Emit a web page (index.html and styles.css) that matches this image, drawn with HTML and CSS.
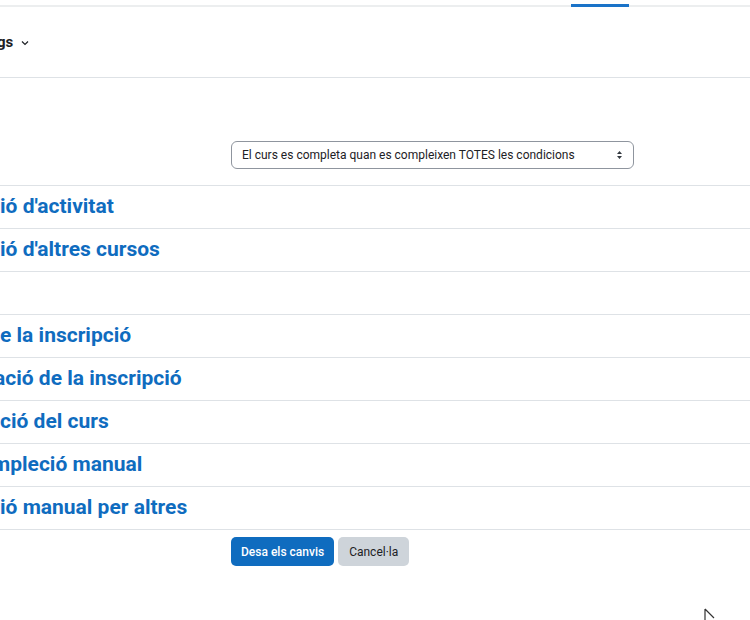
FILE: index.html
```html
<!DOCTYPE html>
<html lang="ca">
<head>
<meta charset="utf-8">
<title>Configuració de compleció del curs</title>
<link rel="stylesheet" href="styles.css">
</head>
<body>
<div class="tabs"><span class="tab-active"></span></div>
<div class="tertiary">
  <span class="tert-title">gs</span>
  <svg class="chev" width="8" height="6" viewBox="0 0 8 6"><path d="M1 1.5 L4 4.5 L7 1.5" fill="none" stroke="#1d2125" stroke-width="1.2"/></svg>
</div>
<form class="form">
  <div class="agg-row">
    <div class="select">
      <span>El curs es completa quan es compleixen TOTES les condicions</span>
      <svg width="7" height="10" viewBox="0 0 7 10"><path d="M3.5 1 L6 4 L1 4 Z M3.5 9 L6 6 L1 6 Z" fill="#343a40"/></svg>
    </div>
  </div>
  <div class="sections">
    <div class="sec"><h3>ió d'activitat</h3></div>
    <div class="sec"><h3>ió d'altres cursos</h3></div>
    <div class="sec"><h3></h3></div>
    <div class="sec"><h3>e la inscripció</h3></div>
    <div class="sec"><h3 class="clip-a">ació de la inscripció</h3></div>
    <div class="sec"><h3>ció del curs</h3></div>
    <div class="sec"><h3 class="clip-m">mpleció manual</h3></div>
    <div class="sec"><h3>ió manual per altres</h3></div>
  </div>
  <div class="buttons">
    <button type="button" class="btn btn-primary">Desa els canvis</button>
    <button type="button" class="btn btn-secondary">Cancel·la</button>
  </div>
</form>
<svg class="cursor" width="12" height="14" viewBox="0 0 12 14"><path d="M1 1 L1 12 M1 1 L10 10" fill="none" stroke="#333" stroke-width="1.2"/></svg>
</body>
</html>
```
FILE: styles.css
```css
html, body {
  margin: 0;
  padding: 0;
  background: #fff;
  font-family: Roboto, "Liberation Sans", sans-serif;
  color: #1d2125;
  overflow: hidden;
}
body {
  width: 750px;
  height: 620px;
  position: relative;
}
.tabs {
  height: 5px;
  border-bottom: 2px solid #eceeef;
  display: flex;
}
.tab-active {
  display: block;
  margin-left: 571px;
  width: 58px;
  height: 3px;
  margin-top: 4px;
  background: #1a73c8;
}
.tertiary {
  height: 70px;
  border-bottom: 1px solid #dee2e6;
  display: flex;
  align-items: center;
  gap: 8px;
}
.tert-title {
  font-weight: 700;
  font-size: 15px;
  color: #1d2125;
  margin-left: -3px;
}
.chev {
  margin-top: 2px;
}
.form {
  display: flex;
  flex-direction: column;
}
.agg-row {
  padding-top: 63px;
  padding-left: 231px;
  height: 28px;
  padding-bottom: 16px;
}
.select {
  width: 381px;
  height: 26px;
  border: 1px solid #8f959e;
  border-radius: 6px;
  display: flex;
  align-items: center;
  justify-content: space-between;
  padding: 0 10px 0 10px;
  font-size: 12px;
  color: #1d2125;
}
.sections {
  border-top: 1px solid #dee2e6;
}
.sec {
  height: 42px;
  border-bottom: 1px solid #dee2e6;
  display: flex;
  align-items: center;
  overflow: hidden;
}
.sec h3 {
  margin: 0;
  font-size: 21px;
  font-weight: 700;
  color: #0f6cbf;
  padding-bottom: 2px;
  white-space: nowrap;
}
.sec h3.clip-a {
  margin-left: -6px;
}
.sec h3.clip-m {
  margin-left: -8px;
}
.buttons {
  display: flex;
  gap: 4px;
  padding-left: 231px;
  padding-top: 7px;
}
.btn {
  font-family: Roboto, "Liberation Sans", sans-serif;
  font-size: 12px;
  height: 29px;
  border: none;
  border-radius: 5px;
  padding: 0 10px;
  white-space: nowrap;
}
.btn-primary {
  background: #0f6cbf;
  color: #fff;
  font-weight: 500;
}
.btn-secondary {
  background: #ced4da;
  color: #1d2125;
  padding: 0 11px;
}
.cursor {
  position: absolute;
  left: 704px;
  top: 608px;
}
```
